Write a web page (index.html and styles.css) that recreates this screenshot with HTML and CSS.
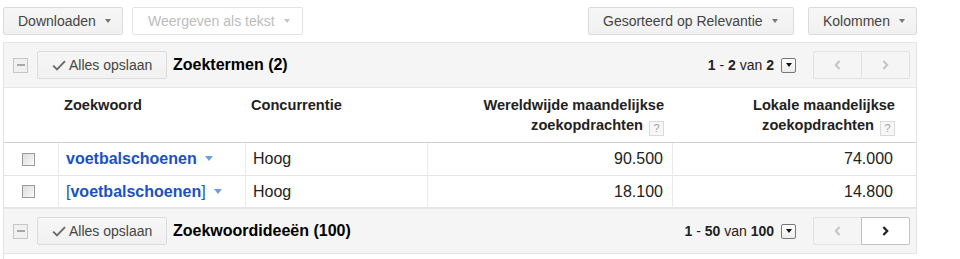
FILE: index.html
```html
<!DOCTYPE html>
<html lang="nl">
<head>
<meta charset="utf-8">
<title>Zoekwoorden</title>
<link rel="stylesheet" href="styles.css">
</head>
<body>
<div class="page">
  <div class="toolbar">
    <div class="tb-group tb-left">
      <button class="btn w-download">Downloaden<span class="caret"></span></button>
      <button class="btn btn-off w-text">Weergeven als tekst<span class="caret"></span></button>
    </div>
    <div class="tb-group tb-right">
      <button class="btn w-sort">Gesorteerd op Relevantie<span class="caret"></span></button>
      <button class="btn w-cols">Kolommen<span class="caret"></span></button>
    </div>
  </div>

  <div class="panel">
    <div class="section-head">
      <span class="collapse"><span class="collapse-bar"></span></span>
      <button class="btn save-btn"><svg class="check" width="14" height="11" viewBox="0 0 14 11"><path d="M1.2 5.6 L5 9.4 L13 1.2" fill="none" stroke="#6a6a6a" stroke-width="1.9"/></svg>Alles opslaan</button>
      <h2 class="title">Zoektermen (2)</h2>
      <div class="pager">
        <span class="range"><b>1</b> - <b>2</b> van <b>2</b></span>
        <span class="pp-select"><span class="pp-caret"></span></span>
        <div class="pp-btns">
          <span class="pp pp-off"><svg width="7" height="10" viewBox="0 0 7 10"><path d="M5.6 1 L1.8 5 L5.6 9" fill="none" stroke="#c6c6c6" stroke-width="2.1"/></svg></span>
          <span class="pp pp-off"><svg width="7" height="10" viewBox="0 0 7 10"><path d="M1.4 1 L5.2 5 L1.4 9" fill="none" stroke="#c6c6c6" stroke-width="2.1"/></svg></span>
        </div>
      </div>
    </div>

    <table class="grid">
      <colgroup>
        <col class="c-check"><col class="c-kw"><col class="c-comp"><col class="c-world"><col class="c-local">
      </colgroup>
      <thead>
        <tr>
          <th></th>
          <th class="th-left">Zoekwoord</th>
          <th class="th-left">Concurrentie</th>
          <th class="th-right">Wereldwijde maandelijkse<br>zoekopdrachten<span class="help">?</span></th>
          <th class="th-right th-last">Lokale maandelijkse<br>zoekopdrachten<span class="help">?</span></th>
        </tr>
      </thead>
      <tbody>
        <tr>
          <td class="td-check"><span class="cb"></span></td>
          <td class="td-kw"><a class="kw">voetbalschoenen</a><span class="kw-caret"></span></td>
          <td class="td-text">Hoog</td>
          <td class="td-num">90.500</td>
          <td class="td-num td-last">74.000</td>
        </tr>
        <tr>
          <td class="td-check"><span class="cb"></span></td>
          <td class="td-kw"><a class="kw"><span class="br">[</span>voetbalschoenen<span class="br">]</span></a><span class="kw-caret"></span></td>
          <td class="td-text">Hoog</td>
          <td class="td-num">18.100</td>
          <td class="td-num td-last">14.800</td>
        </tr>
      </tbody>
    </table>

    <div class="section-head">
      <span class="collapse"><span class="collapse-bar"></span></span>
      <button class="btn save-btn"><svg class="check" width="14" height="11" viewBox="0 0 14 11"><path d="M1.2 5.6 L5 9.4 L13 1.2" fill="none" stroke="#6a6a6a" stroke-width="1.9"/></svg>Alles opslaan</button>
      <h2 class="title">Zoekwoordideeën (100)</h2>
      <div class="pager">
        <span class="range"><b>1</b> - <b>50</b> van <b>100</b></span>
        <span class="pp-select"><span class="pp-caret"></span></span>
        <div class="pp-btns">
          <span class="pp pp-off"><svg width="7" height="10" viewBox="0 0 7 10"><path d="M5.6 1 L1.8 5 L5.6 9" fill="none" stroke="#c6c6c6" stroke-width="2.1"/></svg></span>
          <span class="pp pp-on"><svg width="7" height="10" viewBox="0 0 7 10"><path d="M1.4 1 L5.2 5 L1.4 9" fill="none" stroke="#222" stroke-width="2.3"/></svg></span>
        </div>
      </div>
    </div>
    <div class="next"></div>
  </div>
</div>
</body>
</html>
```

FILE: styles.css
```css
* { box-sizing: border-box; }

body {
  margin: 0;
  font-family: "Liberation Sans", Arial, sans-serif;
  color: #222;
  background: #fff;
}

.page {
  padding: 7px 0 0 3px;
  width: 917px;
}

/* toolbar */
.toolbar {
  display: flex;
  justify-content: space-between;
  height: 28px;
}
.tb-group { display: flex; }
.tb-left { gap: 9px; }
.tb-right { gap: 14px; }

.btn {
  display: inline-flex;
  align-items: center;
  height: 28px;
  margin: 0;
  padding: 0 0 0 14px;
  border: 1px solid #dcdcdc;
  border-radius: 2px;
  background: linear-gradient(#f6f6f6, #f1f1f1);
  font: 14px "Liberation Sans", Arial, sans-serif;
  color: #444;
  cursor: default;
}
.btn .caret {
  margin-left: 9px;
  width: 0;
  height: 0;
  border-left: 3.5px solid transparent;
  border-right: 3.5px solid transparent;
  border-top: 4px solid #777;
}
.btn-off {
  background: #fff;
  border-color: #e3e3e3;
  color: #bcbcbc;
  padding-left: 15px;
}
.btn-off .caret { border-top-color: #c6c6c6; }
.w-download { width: 120px; }
.w-text { width: 171px; }
.w-sort { width: 206px; }
.w-cols { width: 109px; }

/* panel */
.panel {
  margin-top: 7px;
  width: 914px;
}

.section-head {
  display: flex;
  align-items: center;
  height: 46px;
  padding: 0 6px 0 9px;
  background: #f5f5f5;
  border: 1px solid #e5e5e5;
}

.collapse {
  width: 15px;
  height: 15px;
  border: 1px solid #c6c6c6;
  background: #f0f0f0;
  display: flex;
  align-items: center;
  justify-content: center;
}
.collapse-bar {
  width: 8px;
  height: 2px;
  background: #a8a8a8;
}

.save-btn {
  width: 130px;
  margin-left: 9px;
}
.check { margin-right: 3px; }

.title {
  margin: 0 0 0 6px;
  font-size: 16px;
  font-weight: bold;
  color: #000;
}

.pager {
  margin-left: auto;
  display: flex;
  align-items: center;
}
.range {
  font-size: 14px;
  color: #222;
}
.pp-select {
  margin-left: 7px;
  width: 15px;
  height: 15px;
  border: 1px solid #777;
  border-radius: 2px;
  background: linear-gradient(#fff, #ececec);
  display: flex;
  align-items: center;
  justify-content: center;
}
.pp-caret {
  width: 0;
  height: 0;
  border-left: 3.5px solid transparent;
  border-right: 3.5px solid transparent;
  border-top: 4px solid #111;
}
.pp-btns {
  margin-left: 17px;
  display: flex;
}
.pp {
  width: 49px;
  height: 28px;
  display: flex;
  align-items: center;
  justify-content: center;
  border: 1px solid #e2e2e2;
  background: #f5f5f5;
}
.pp + .pp { margin-left: -1px; }
.pp:first-child { border-radius: 2px 0 0 2px; }
.pp:last-child { border-radius: 0 2px 2px 0; }
.pp-on {
  background: #fff;
  border-color: #c2c2c2;
  position: relative;
}

/* grid */
.grid {
  width: 914px;
  border-collapse: separate;
  border-spacing: 0;
  table-layout: fixed;
  border-left: 1px solid #e2e2e2;
  border-right: 1px solid #e2e2e2;
}
.c-check { width: 55px; }
.c-kw { width: 187px; }
.c-comp { width: 182px; }
.c-world { width: 245px; }
.c-local { width: 243px; }

.grid th {
  height: 55px;
  padding: 7px 9px 0 5px;
  vertical-align: top;
  font-size: 14.6px;
  line-height: 20px;
  font-weight: bold;
  color: #222;
  border-bottom: 1px solid #cfcfcf;
}
.th-left { text-align: left; }
.th-right { text-align: right; }
.grid th.th-last { padding-right: 21px; }

.help {
  display: inline-block;
  width: 15px;
  height: 15px;
  margin-left: 6px;
  vertical-align: -2px;
  border: 1px solid #dadada;
  background: #f7f7f7;
  color: #a0a0a0;
  font-size: 11px;
  font-weight: normal;
  line-height: 13px;
  text-align: center;
}

.grid td {
  padding: 0 9px 0 6px;
  font-size: 16px;
  color: #222;
  vertical-align: middle;
  border-bottom: 1px solid #e5e5e5;
  border-right: 1px solid #ebebeb;
}
.grid tbody tr:first-child td { height: 33px; }
.grid tbody tr:last-child td { height: 32px; }
.grid td.td-last { border-right: none; padding-right: 23px; }

.td-check { padding-left: 18px !important; }
.cb {
  display: block;
  width: 13px;
  height: 13px;
  border: 1px solid #9a9a9a;
  background: linear-gradient(135deg, #dcdcdc, #fbfbfb);
}
.td-kw { padding-left: 7px !important; }
.kw {
  color: #1a50c8;
  font-weight: bold;
  text-decoration: none;
}
.kw .br { font-weight: normal; }
.kw-caret {
  display: inline-block;
  margin-left: 8px;
  vertical-align: 3px;
  width: 0;
  height: 0;
  border-left: 4.5px solid transparent;
  border-right: 4.5px solid transparent;
  border-top: 5px solid #6a9fe2;
}
.td-text { padding-left: 7px !important; }
.td-num { text-align: right; }

.next {
  height: 12px;
  border-left: 1px solid #e2e2e2;
}
```
